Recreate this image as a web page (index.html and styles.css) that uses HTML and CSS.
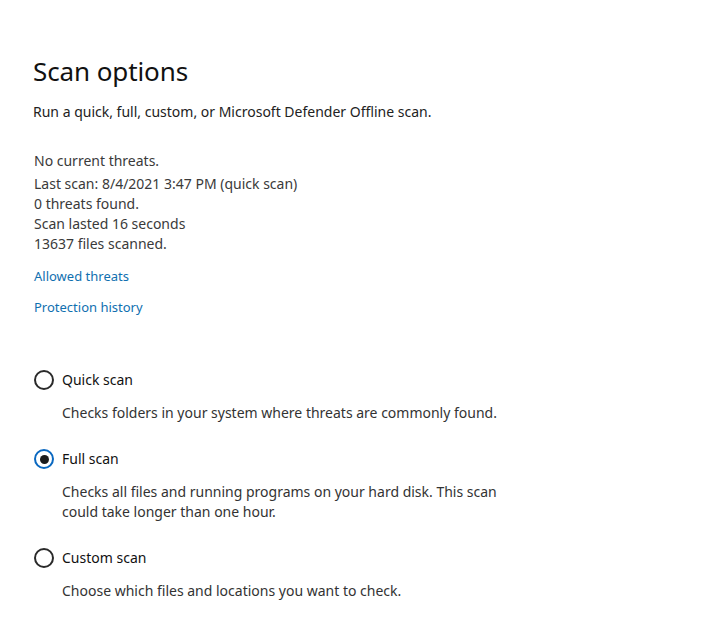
FILE: index.html
```html
<!DOCTYPE html>
<html lang="en">
<head>
<meta charset="utf-8">
<title>Scan options</title>
<link rel="stylesheet" href="styles.css">
</head>
<body>
<main class="page">
  <h1 class="title">Scan options</h1>
  <p class="subtitle">Run a quick, full, custom, or Microsoft Defender Offline scan.</p>

  <div class="status">
    <div class="status-head">No current threats.</div>
    <div class="status-line">Last scan: 8/4/2021 3:47 PM (quick scan)</div>
    <div class="status-line">0 threats found.</div>
    <div class="status-line">Scan lasted 16 seconds</div>
    <div class="status-line">13637 files scanned.</div>
  </div>

  <div class="links">
    <a class="link" href="#">Allowed threats</a>
    <a class="link" href="#">Protection history</a>
  </div>

  <div class="options">
    <div class="option">
      <div class="option-row"><span class="radio"></span><span class="option-label">Quick scan</span></div>
      <div class="option-desc">Checks folders in your system where threats are commonly found.</div>
    </div>
    <div class="option">
      <div class="option-row"><span class="radio radio-on"></span><span class="option-label">Full scan</span></div>
      <div class="option-desc">Checks all files and running programs on your hard disk. This scan<br>could take longer than one hour.</div>
    </div>
    <div class="option">
      <div class="option-row"><span class="radio"></span><span class="option-label">Custom scan</span></div>
      <div class="option-desc">Choose which files and locations you want to check.</div>
    </div>
  </div>
</main>
</body>
</html>
```

FILE: styles.css
```css
html, body {
  margin: 0;
  padding: 0;
  background: #ffffff;
}

body {
  font-family: "Noto Sans", "Open Sans", "Liberation Sans", sans-serif;
  color: #1f1f1f;
}

.page {
  padding: 51px 0 0 33px;
  width: 680px;
}

.title {
  margin: 0;
  font-size: 26px;
  font-weight: 400;
  line-height: 40px;
  color: #111;
  letter-spacing: -0.1px;
}

.subtitle {
  margin: 11px 0 0 0;
  font-size: 14px;
  line-height: 20px;
  color: #222;
}

.status {
  margin-top: 29px;
  padding-left: 1px;
  font-size: 14px;
  line-height: 20px;
  color: #3a3a3a;
}

.status-head {
  margin-bottom: 3px;
}

.links {
  margin-top: 12px;
  padding-left: 1px;
  display: flex;
  flex-direction: column;
  align-items: flex-start;
  gap: 11px;
}

.link {
  font-size: 13px;
  line-height: 20px;
  color: #1070b0;
  text-decoration: none;
}

.options {
  margin-top: 51px;
  display: flex;
  flex-direction: column;
}

.option-row {
  display: flex;
  align-items: center;
  gap: 8px;
  height: 24px;
  padding-left: 1px;
}

.radio {
  width: 16px;
  height: 16px;
  border: 2px solid #2a2a2a;
  border-radius: 50%;
  display: flex;
  align-items: center;
  justify-content: center;
  box-sizing: content-box;
}

.radio-on {
  border-color: #0a68c0;
}

.radio-on::after {
  content: "";
  width: 9px;
  height: 9px;
  border-radius: 50%;
  background: #1b1b1b;
}

.option-label {
  font-size: 14px;
  line-height: 20px;
  color: #111;
}

.option-desc {
  margin: 11px 0 24px 29px;
  font-size: 14px;
  line-height: 20px;
  color: #333;
}
```
